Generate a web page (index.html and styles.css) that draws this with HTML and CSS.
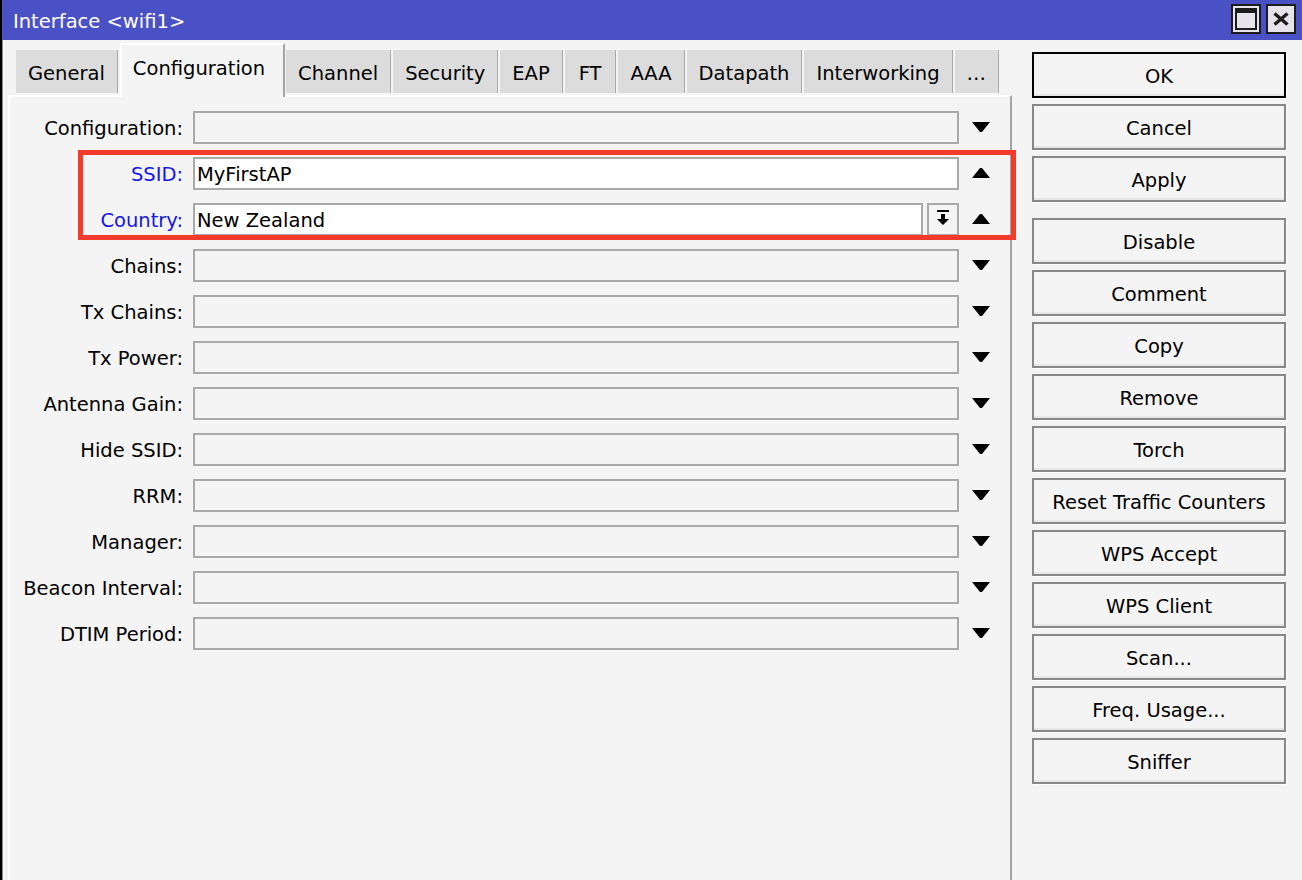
FILE: index.html
```html
<!DOCTYPE html>
<html>
<head>
<meta charset="utf-8">
<title>Interface &lt;wifi1&gt;</title>
<link rel="stylesheet" href="styles.css">
</head>
<body>
<div class="window">
  <div class="titlebar">
    <span class="title">Interface &lt;wifi1&gt;</span>
    <div class="winbtns">
      <span class="winbtn"><svg width="22" height="22" viewBox="0 0 22 22"><rect x="1" y="1" width="20" height="20" fill="none" stroke="#1c1c1c" stroke-width="2"/><rect x="1" y="1" width="20" height="4" fill="#1c1c1c"/></svg></span>
      <span class="winbtn"><svg width="16" height="14" viewBox="0 0 16 14"><path d="M1.5 1.5L14.5 12.5M14.5 1.5L1.5 12.5" stroke="#1c1c1c" stroke-width="3.4" fill="none"/></svg></span>
    </div>
  </div>
  <div class="main">
    <div class="left">
      <div class="tabs">
        <div class="tab">General</div>
        <div class="tab active">Configuration</div>
        <div class="tab">Channel</div>
        <div class="tab">Security</div>
        <div class="tab">EAP</div>
        <div class="tab narrow">FT</div>
        <div class="tab">AAA</div>
        <div class="tab">Datapath</div>
        <div class="tab">Interworking</div>
        <div class="tab">…</div>
      </div>
      <div class="panel">
        <div class="row">
          <label>Configuration:</label>
          <div class="field"></div>
          <span class="arrowcell"><svg width="18" height="10" viewBox="0 0 18 10"><path d="M0 0H18L10 10H8Z"/></svg></span>
        </div>
        <div class="row">
          <label class="blue">SSID:</label>
          <div class="field filled">MyFirstAP</div>
          <span class="arrowcell"><svg width="18" height="10" viewBox="0 0 18 10"><path d="M0 10H18L10 0H8Z"/></svg></span>
        </div>
        <div class="row">
          <label class="blue">Country:</label>
          <div class="combo">
            <div class="field filled">New Zealand</div>
            <span class="dropbtn"><svg width="14" height="18" viewBox="0 0 14 18"><rect x="1" y="0" width="12" height="2"/><path d="M5 4H9V9H13L7 15L1 9H5Z"/></svg></span>
          </div>
          <span class="arrowcell"><svg width="18" height="10" viewBox="0 0 18 10"><path d="M0 10H18L10 0H8Z"/></svg></span>
        </div>
        <div class="row">
          <label>Chains:</label>
          <div class="field"></div>
          <span class="arrowcell"><svg width="18" height="10" viewBox="0 0 18 10"><path d="M0 0H18L10 10H8Z"/></svg></span>
        </div>
        <div class="row">
          <label>Tx Chains:</label>
          <div class="field"></div>
          <span class="arrowcell"><svg width="18" height="10" viewBox="0 0 18 10"><path d="M0 0H18L10 10H8Z"/></svg></span>
        </div>
        <div class="row">
          <label>Tx Power:</label>
          <div class="field"></div>
          <span class="arrowcell"><svg width="18" height="10" viewBox="0 0 18 10"><path d="M0 0H18L10 10H8Z"/></svg></span>
        </div>
        <div class="row">
          <label>Antenna Gain:</label>
          <div class="field"></div>
          <span class="arrowcell"><svg width="18" height="10" viewBox="0 0 18 10"><path d="M0 0H18L10 10H8Z"/></svg></span>
        </div>
        <div class="row">
          <label>Hide SSID:</label>
          <div class="field"></div>
          <span class="arrowcell"><svg width="18" height="10" viewBox="0 0 18 10"><path d="M0 0H18L10 10H8Z"/></svg></span>
        </div>
        <div class="row">
          <label>RRM:</label>
          <div class="field"></div>
          <span class="arrowcell"><svg width="18" height="10" viewBox="0 0 18 10"><path d="M0 0H18L10 10H8Z"/></svg></span>
        </div>
        <div class="row">
          <label>Manager:</label>
          <div class="field"></div>
          <span class="arrowcell"><svg width="18" height="10" viewBox="0 0 18 10"><path d="M0 0H18L10 10H8Z"/></svg></span>
        </div>
        <div class="row">
          <label>Beacon Interval:</label>
          <div class="field"></div>
          <span class="arrowcell"><svg width="18" height="10" viewBox="0 0 18 10"><path d="M0 0H18L10 10H8Z"/></svg></span>
        </div>
        <div class="row">
          <label>DTIM Period:</label>
          <div class="field"></div>
          <span class="arrowcell"><svg width="18" height="10" viewBox="0 0 18 10"><path d="M0 0H18L10 10H8Z"/></svg></span>
        </div>
        <div class="highlight"></div>
      </div>
    </div>
    <div class="actions">
      <div class="btn default">OK</div>
      <div class="btn">Cancel</div>
      <div class="btn">Apply</div>
      <div class="btn sep">Disable</div>
      <div class="btn">Comment</div>
      <div class="btn">Copy</div>
      <div class="btn">Remove</div>
      <div class="btn">Torch</div>
      <div class="btn">Reset Traffic Counters</div>
      <div class="btn">WPS Accept</div>
      <div class="btn">WPS Client</div>
      <div class="btn">Scan...</div>
      <div class="btn">Freq. Usage...</div>
      <div class="btn">Sniffer</div>
    </div>
  </div>
</div>
</body>
</html>
```

FILE: styles.css
```css
* { box-sizing: border-box; }
html, body { margin: 0; height: 100%; }
body {
  background: #f4f4f4;
  font-family: "DejaVu Sans", "Liberation Sans", sans-serif;
  font-size: 19.5px;
  color: #000;
  overflow: hidden;
}
.window {
  height: 880px;
  border-left: 2px solid #000;
  box-shadow: inset 1px 0 0 #8c8c8c;
  display: flex;
  flex-direction: column;
}
.titlebar {
  height: 40px;
  flex: none;
  background: #4a51c5;
  color: #fff;
  display: flex;
  align-items: center;
  justify-content: space-between;
  padding: 0 6px 0 11px;
}
.title { padding-top: 3px; }
.winbtns {
  display: flex;
  gap: 5px;
  align-self: flex-start;
  margin-top: 4px;
}
.winbtn {
  width: 30px;
  height: 30px;
  border: 2px solid #1c1c1c;
  background: #e7e3ea;
  display: flex;
  align-items: center;
  justify-content: center;
}
.main { flex: 1; display: flex; }
.left {
  width: 1010px;
  display: flex;
  flex-direction: column;
}
.tabs {
  height: 55px;
  flex: none;
  display: flex;
  align-items: flex-end;
  padding-left: 14px;
}
.tab {
  height: 43px;
  margin-bottom: 2px;
  margin-right: 2px;
  background: #dcdcdc;
  border-right: 1px solid #a9a9a9;
  padding: 3px 12px 0;
  display: flex;
  align-items: center;
  white-space: nowrap;
}
.tab.narrow { padding: 3px 14px 0; }
.tab.active {
  height: 54px;
  margin-bottom: -2px;
  margin-right: 1px;
  background: #f4f4f4;
  border-top: 2px solid #fff;
  border-left: 2px solid #fff;
  border-right: 2px solid #a3a3a3;
  padding: 0 18px 5px 11px;
  position: relative;
  z-index: 1;
}
.panel {
  flex: 1;
  margin-left: 6px;
  width: 1004px;
  border-top: 2px solid #fff;
  border-left: 2px solid #fff;
  border-right: 2px solid #a3a3a3;
  padding-top: 7px;
  position: relative;
}
.row {
  display: flex;
  align-items: center;
  height: 46px;
}
.row label {
  width: 173px;
  margin-right: 10px;
  text-align: right;
  white-space: nowrap;
  padding-top: 2px;
}
.row label.blue { color: #1616e8; }
.field {
  width: 766px;
  height: 33px;
  border: 2px solid #a9a9a9;
  background: #f4f4f4;
  padding: 2px 0 0 2px;
  display: flex;
  align-items: center;
  white-space: nowrap;
}
.field.filled { background: #fff; }
.combo {
  width: 766px;
  display: flex;
  gap: 4px;
}
.combo .field { flex: 1; width: auto; }
.dropbtn {
  width: 32px;
  height: 33px;
  border: 2px solid #a9a9a9;
  background: #f4f4f4;
  display: flex;
  align-items: center;
  justify-content: center;
}
.arrowcell {
  width: 44px;
  display: flex;
  justify-content: center;
}
.highlight {
  position: absolute;
  left: 68px;
  top: 53px;
  width: 938px;
  height: 90px;
  border: 5px solid #f33b2d;
}
.actions {
  margin-left: 20px;
  width: 254px;
  padding-top: 12px;
  display: flex;
  flex-direction: column;
  gap: 6px;
}
.btn {
  height: 46px;
  border: 2px solid #878787;
  background: #f4f4f4;
  display: flex;
  align-items: center;
  justify-content: center;
  white-space: nowrap;
  padding-top: 2px;
  box-shadow: inset 0 -2px 0 #e6e6e6, 1px 1px 0 #fff;
}
.btn.default { border-color: #000; }
.btn.sep { margin-top: 10px; }
```
